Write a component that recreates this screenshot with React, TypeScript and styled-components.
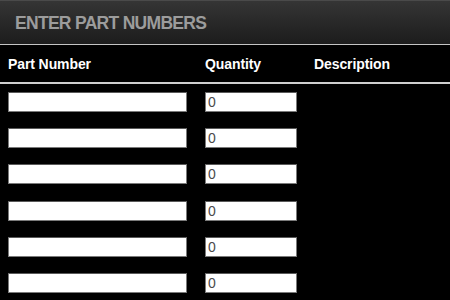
import React from "react";
import styled, { createGlobalStyle } from "styled-components";

const Global = createGlobalStyle`
  html, body { margin: 0; padding: 0; background: #000; }
  body { font-family: "Liberation Sans", Arial, sans-serif; }
`;

const Page = styled.div`
  width: 450px;
  height: 300px;
  background: #000;
  overflow: hidden;
`;

const Header = styled.header`
  height: 43px;
  border-top: 1px solid #4a4a4a;
  border-bottom: 1px solid #c4c4c4;
  background: linear-gradient(#353535, #1c1c1c);
  display: flex;
  align-items: center;
  padding-left: 15px;
`;

const Title = styled.h1`
  margin: 0;
  padding-top: 1px;
  font-size: 17.5px;
  font-weight: bold;
  color: #9c9c9c;
  letter-spacing: -0.7px;
`;

const Grid = styled.div`
  display: grid;
  grid-template-columns: 197px 109px 1fr;
  padding-left: 8px;
`;

const HeadRow = styled(Grid)`
  align-items: center;
  border-bottom: 2px solid #cfcfcf;
  padding-top: 1px;
  box-sizing: border-box;
  height: 39px;
`;

const ColHead = styled.div`
  color: #fff;
  font-size: 14px;
  font-weight: bold;
  letter-spacing: -0.1px;
`;

const Body = styled.div`
  display: flex;
  flex-direction: column;
  gap: 16.2px;
  padding-top: 8px;
`;

const Field = styled.input<{ $w: number }>`
  box-sizing: border-box;
  width: ${(p) => p.$w}px;
  height: 20px;
  margin: 0;
  padding: 0 2px;
  border: 1px solid #7a7a7a;
  border-top-color: #5a5a5a;
  background: #fff;
  font-family: "Liberation Sans", Arial, sans-serif;
  font-size: 14px;
  color: #4a4a4a;
  outline: none;
`;

export default function App() {
  const rows = [0, 1, 2, 3, 4, 5];
  return (
    <Page>
      <Global />
      <Header>
        <Title>ENTER PART NUMBERS</Title>
      </Header>
      <HeadRow>
        <ColHead>Part Number</ColHead>
        <ColHead>Quantity</ColHead>
        <ColHead>Description</ColHead>
      </HeadRow>
      <Body>
        {rows.map((r) => (
          <Grid key={r}>
            <Field $w={179} defaultValue="" />
            <Field $w={92} defaultValue="0" />
            <div />
          </Grid>
        ))}
      </Body>
    </Page>
  );
}
